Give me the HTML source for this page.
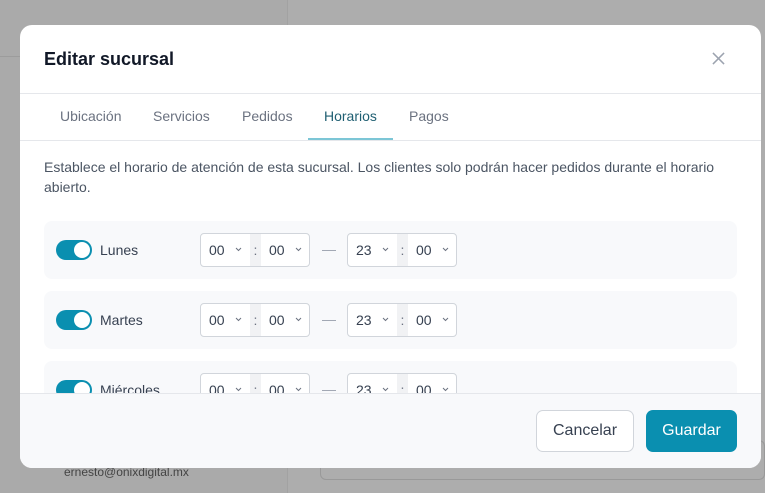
<!DOCTYPE html>
<html><head><style>
*{box-sizing:border-box;margin:0;padding:0}
body{width:765px;height:493px;overflow:hidden;background:#adadad;font-family:"Liberation Sans",sans-serif;position:relative}
.side{position:absolute;left:0;top:0;width:288px;height:493px;background:#aaaaaa;border-right:1px solid #a2a2a2}
.hl{position:absolute;left:0;top:56px;width:288px;height:1px;background:#9c9c9c}
.modal{position:absolute;left:20px;top:25px;width:741px;height:443px;background:#fff;border-radius:12px;overflow:hidden}
.hdr{height:69px;border-bottom:1px solid #e5e7eb;position:relative}
.hdr h1{position:absolute;left:24px;top:24px;font-size:18px;font-weight:bold;color:#111827}
.x{position:absolute;left:692px;top:27px}
.tabs{height:47px;border-bottom:1px solid #e5e7eb;position:relative}
.tab{position:absolute;top:14px;font-size:14px;color:#6b7280}
.tab.a{color:#1f5f72}
.ul{position:absolute;left:288px;top:44px;width:85px;height:2px;background:#7cc6d6}
.desc{position:absolute;left:24px;top:132px;width:690px;font-size:14px;line-height:20px;color:#4b5563}
.row{position:absolute;left:24px;width:693px;height:58px;background:#f8f9fb;border-radius:8px}
.tg{position:absolute;left:12px;top:19px;width:36px;height:20px;border-radius:10px;background:#0a8fb0}
.tg:after{content:"";position:absolute;right:2px;top:2px;width:16px;height:16px;border-radius:50%;background:#fff}
.day{position:absolute;left:56px;top:21px;font-size:14px;color:#374151}
.tm{position:absolute;top:12px;width:110px;height:34px;border:1px solid #d1d5db;border-radius:4px;background:#fff;font-size:14px;color:#374151}
.tm .c{position:absolute;left:49px;top:0;width:11px;height:32px;background:#f1f2f4;text-align:center;line-height:32px;color:#6b7280}
.tm span{position:absolute;top:8px}
.tm svg{position:absolute;top:13px}
.dash{position:absolute;left:278px;top:20px;color:#9ca3af;font-size:14px}
.ftr{position:absolute;left:0;top:368px;width:741px;height:75px;background:#f8f9fb;border-top:1px solid #e5e7eb}
.btn{position:absolute;top:17px;height:42px;border-radius:7px;font-size:16px;text-align:center}
</style></head><body>
<div class="side"></div><div class="hl"></div>
<div style="position:absolute;left:64px;top:465px;font-size:12px;color:#444">ernesto@onixdigital.mx</div>
<div style="position:absolute;left:320px;top:440px;width:445px;height:40px;border:1px solid #999;border-radius:6px"></div>
<div class="modal">
<div class="hdr"><h1>Editar sucursal</h1>
<svg class="x" width="13" height="13" viewBox="0 0 14 14"><path d="M1 1L13 13M13 1L1 13" stroke="#9ca3af" stroke-width="1.6"/></svg></div>
<div class="tabs">
<span class="tab" style="left:40px">Ubicación</span>
<span class="tab" style="left:133px">Servicios</span>
<span class="tab" style="left:222px">Pedidos</span>
<span class="tab a" style="left:304px">Horarios</span>
<span class="tab" style="left:389px">Pagos</span>
<div class="ul"></div></div>
<div class="desc">Establece el horario de atención de esta sucursal. Los clientes solo podrán hacer pedidos durante el horario abierto.</div>
<div class="row" style="top:196px"><div class="tg"></div><div class="day">Lunes</div>
<div class="tm" style="left:156px"><span style="left:8px">00</span><svg style="left:34px" width="7" height="5"><path d="M1 1L3.5 3.5L6 1" stroke="#6b7280" fill="none"/></svg><div class="c">:</div><span style="left:68px">00</span><svg style="left:94px" width="7" height="5"><path d="M1 1L3.5 3.5L6 1" stroke="#6b7280" fill="none"/></svg></div>
<div class="dash">—</div>
<div class="tm" style="left:303px"><span style="left:8px">23</span><svg style="left:34px" width="7" height="5"><path d="M1 1L3.5 3.5L6 1" stroke="#6b7280" fill="none"/></svg><div class="c">:</div><span style="left:68px">00</span><svg style="left:94px" width="7" height="5"><path d="M1 1L3.5 3.5L6 1" stroke="#6b7280" fill="none"/></svg></div></div>
<div class="row" style="top:266px"><div class="tg"></div><div class="day">Martes</div>
<div class="tm" style="left:156px"><span style="left:8px">00</span><svg style="left:34px" width="7" height="5"><path d="M1 1L3.5 3.5L6 1" stroke="#6b7280" fill="none"/></svg><div class="c">:</div><span style="left:68px">00</span><svg style="left:94px" width="7" height="5"><path d="M1 1L3.5 3.5L6 1" stroke="#6b7280" fill="none"/></svg></div>
<div class="dash">—</div>
<div class="tm" style="left:303px"><span style="left:8px">23</span><svg style="left:34px" width="7" height="5"><path d="M1 1L3.5 3.5L6 1" stroke="#6b7280" fill="none"/></svg><div class="c">:</div><span style="left:68px">00</span><svg style="left:94px" width="7" height="5"><path d="M1 1L3.5 3.5L6 1" stroke="#6b7280" fill="none"/></svg></div></div>
<div class="row" style="top:336px"><div class="tg"></div><div class="day">Miércoles</div>
<div class="tm" style="left:156px"><span style="left:8px">00</span><svg style="left:34px" width="7" height="5"><path d="M1 1L3.5 3.5L6 1" stroke="#6b7280" fill="none"/></svg><div class="c">:</div><span style="left:68px">00</span><svg style="left:94px" width="7" height="5"><path d="M1 1L3.5 3.5L6 1" stroke="#6b7280" fill="none"/></svg></div>
<div class="dash">—</div>
<div class="tm" style="left:303px"><span style="left:8px">23</span><svg style="left:34px" width="7" height="5"><path d="M1 1L3.5 3.5L6 1" stroke="#6b7280" fill="none"/></svg><div class="c">:</div><span style="left:68px">00</span><svg style="left:94px" width="7" height="5"><path d="M1 1L3.5 3.5L6 1" stroke="#6b7280" fill="none"/></svg></div></div>
<div class="ftr">
<div class="btn" style="left:516px;top:16px;width:98px;line-height:40px;background:#fff;border:1px solid #d1d5db;color:#374151">Cancelar</div>
<div class="btn" style="left:626px;top:16px;width:91px;line-height:42px;background:#0a8fb0;color:#fff">Guardar</div>
</div>
</div>
</body></html>
